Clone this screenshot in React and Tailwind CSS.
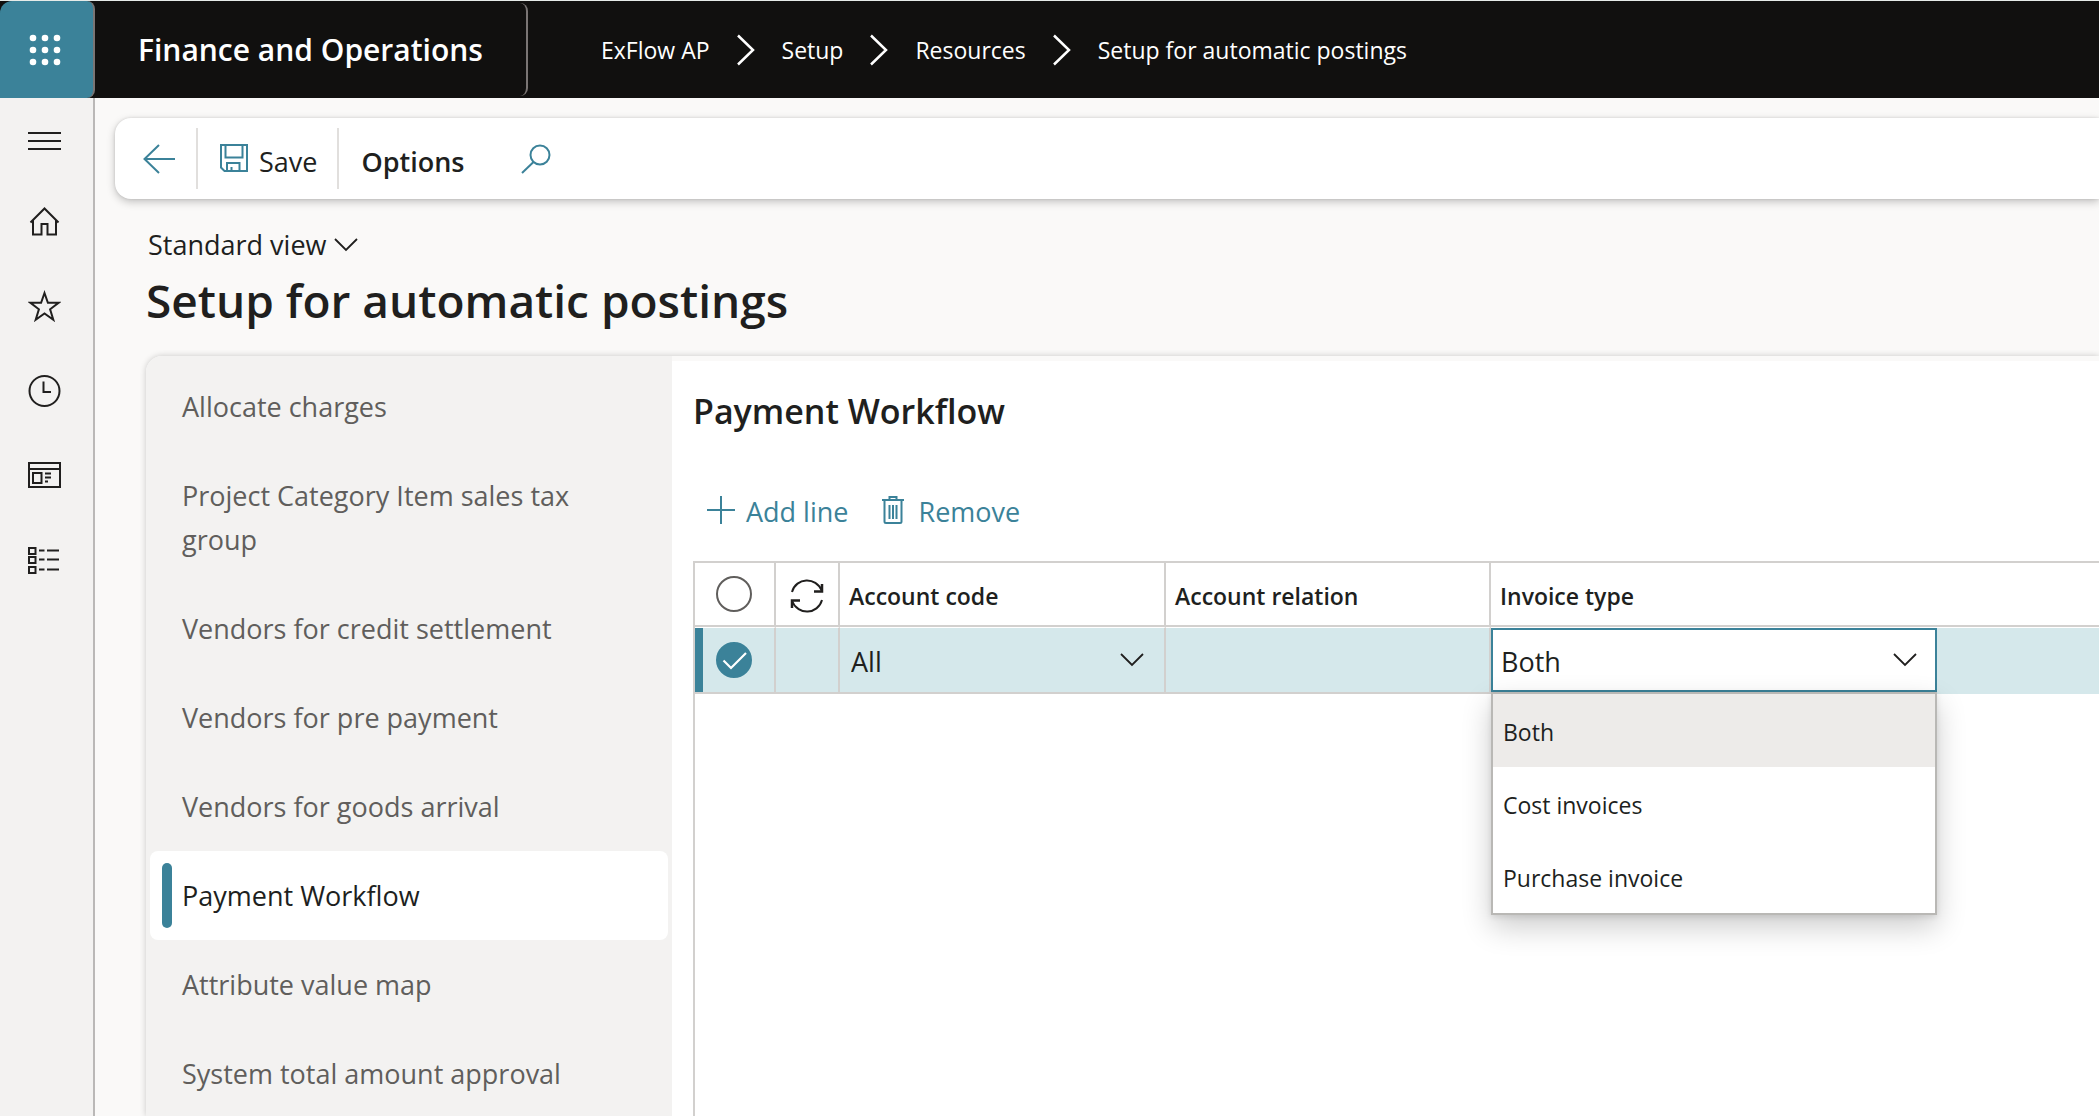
import React, { useState } from "react";

const railIcons = [
  {
    label: "Expand the navigation pane",
    art: <path d="M0 13h33M0 21h33M0 29h33" />,
  },
  {
    label: "Home",
    art: <path d="M2.5 17.5 16.5 3.5l14 14M5 15.5V29.5h8.5V19h6v10.5H28V15.5" />,
  },
  {
    label: "Favorites",
    art: <path d="m16.500 3 3.400 9.800h10.600l-8.400 6.500 3.200 10.400-8.800-6.200-8.800 6.200 3.200-10.400-8.400-6.500h10.600z" />,
  },
  {
    label: "Recent",
    art: (
      <>
        <circle cx="16.5" cy="16" r="15" />
        <path d="M15.500 6.500V17H23" />
      </>
    ),
  },
  {
    label: "Workspaces",
    art: (
      <>
        <path d="M1 3h31v24H1zM1 9h31" />
        <path d="M5 13h8.500v10H5zM17 13.500h6M17 17.500h6M17 21.500h3" />
      </>
    ),
  },
  {
    label: "Modules",
    art: (
      <>
        <path d="M1 3h6.500v6H1zM1 12h6.500v6H1zM1 22h6.500v6H1z" />
        <path d="M11 5.500h5.500M19 5.500h12M11 14.500h5.500M19 14.500h12M11 24.500h5.500M19 24.500h12" />
      </>
    ),
  },
];

const crumbs = ["ExFlow AP", "Setup", "Resources", "Setup for automatic postings"];

const sections = [
  "Allocate charges",
  "Project Category Item sales tax group",
  "Vendors for credit settlement",
  "Vendors for pre payment",
  "Vendors for goods arrival",
  "Payment Workflow",
  "Attribute value map",
  "System total amount approval",
];

const invoiceTypes = ["Both", "Cost invoices", "Purchase invoice"];

function Chevron({ className = "" }) {
  return (
    <svg className={`h-3.5 w-6 ${className}`} viewBox="0 0 24 14" fill="none" stroke="currentColor" strokeWidth="1.800" aria-hidden="true">
      <path d="M1 1l11 11L23 1" />
    </svg>
  );
}

function RowCheck({ label, defaultChecked = false }) {
  const [checked, setChecked] = useState(defaultChecked);
  return (
    <label className="relative mx-auto flex size-9">
      <input
        type="checkbox"
        aria-label={label}
        checked={checked}
        onChange={(e) => setChecked(e.target.checked)}
        className="size-9 appearance-none rounded-full border-2 border-[#605e5c] bg-white checked:border-[#3b8299] checked:bg-[#3b8299]"
      />
      {checked && (
        <svg className="pointer-events-none absolute inset-0 size-9" viewBox="0 0 36 36" fill="none" stroke="#fff" strokeWidth="2.200" aria-hidden="true">
          <path d="M7.500 18.500 15 26 30 11" />
        </svg>
      )}
    </label>
  );
}

function TopBar() {
  return (
    <header className="flex h-[98px] shrink-0 border-t border-[#e6ebe8] bg-[#11100f] text-white">
      <button type="button" aria-label="App launcher" className="flex w-[95px] items-center justify-center rounded-r-lg rounded-tl-xl border-r-2 border-[#7a7574] bg-[#3b8299] pr-1">
        <svg className="size-8" viewBox="0 0 32 32" fill="currentColor" aria-hidden="true">
          {[4, 16, 28].map((y) => [4, 16, 28].map((x) => <circle key={`${x}-${y}`} cx={x} cy={y} r="3.300" />))}
        </svg>
      </button>
      <div className="my-0.5 flex w-[433px] items-center rounded-r-lg border-r-2 border-[#7a7574] pl-[43px] text-[30px] font-semibold">
        Finance and Operations
      </div>
      <nav aria-label="Breadcrumb" className="flex items-center pl-[73px]">
        <ol className="flex items-center gap-[26px] text-[23px]">
          {crumbs.map((crumb, i) => (
            <li key={crumb} className="flex items-center gap-[26px]">
              {i > 0 && (
                <svg className="h-8 w-5" viewBox="0 0 20 32" fill="none" stroke="currentColor" strokeWidth="2.500" aria-hidden="true">
                  <path d="M2 1.500 17 16 2 30.500" />
                </svg>
              )}
              <a href="#" className="pt-0.5 whitespace-nowrap">{crumb}</a>
            </li>
          ))}
        </ol>
      </nav>
    </header>
  );
}

function Rail() {
  return (
    <nav aria-label="Navigation" className="flex w-[95px] shrink-0 flex-col gap-[52px] border-r-2 border-[#bab8b7] bg-[#f3f2f1] pt-[22px] text-[#201f1e]">
      {railIcons.map(({ label, art }) => (
        <button key={label} type="button" aria-label={label} className="ml-7 size-[33px]">
          <svg className="size-[33px]" viewBox="0 0 33 33" fill="none" stroke="currentColor" strokeWidth="2" aria-hidden="true">
            {art}
          </svg>
        </button>
      ))}
    </nav>
  );
}

function ActionBar() {
  return (
    <div className="mt-5 ml-5 flex h-[81px] shrink-0 items-center rounded-l-2xl bg-white pl-7 text-[27px] text-[#201f1e] shadow-[0_3px_8px_rgba(0,0,0,0.22),0_0_3px_rgba(0,0,0,0.12)]">
      <button type="button" aria-label="Back" className="text-[#3b8299]">
        <svg className="h-[30px] w-8" viewBox="0 0 32 30" fill="none" stroke="currentColor" strokeWidth="2" aria-hidden="true">
          <path d="M16 1 1.500 15 16 29M1.500 15H32" />
        </svg>
      </button>
      <span className="ml-[21px] h-[61px] w-0.5 bg-[#e1dfdd]" />
      <button type="button" className="ml-[22px] flex items-center gap-[11px]">
        <svg className="h-[30px] w-7 text-[#3b8299]" viewBox="0 0 28 30" fill="none" stroke="currentColor" strokeWidth="2" aria-hidden="true">
          <path d="M1 1h26v26H4.500L1 23.500zM5.500 1v12.500h17V1M7 27v-8h12.500v8M11.500 27v-4" />
        </svg>
        <span className="pt-2">Save</span>
      </button>
      <span className="ml-5 h-[61px] w-0.5 bg-[#e1dfdd]" />
      <button type="button" className="ml-[22px] pt-2 font-semibold">Options</button>
      <button type="button" aria-label="Search" className="ml-14 text-[#3b8299]">
        <svg className="size-[30px]" viewBox="0 0 30 30" fill="none" stroke="currentColor" strokeWidth="2" aria-hidden="true">
          <circle cx="19" cy="11" r="9.500" />
          <path d="M12.500 18 1 29" />
        </svg>
      </button>
    </div>
  );
}

function SectionNav() {
  return (
    <nav aria-label="Sections" className="w-[526px] shrink-0 rounded-tl-2xl bg-[#f3f2f1] text-[27px] leading-[44px]">
      <ul className="flex flex-col pt-1.5">
        {sections.map((section) => {
          const current = section === "Payment Workflow";
          return (
            <li key={section} className="px-1">
              <a
                href="#"
                aria-current={current ? "page" : undefined}
                className={
                  current
                    ? "flex items-center rounded-lg bg-white pr-8 pl-3 text-[#201f1e]"
                    : "flex items-center pr-8 pl-3 text-[#605e5c]"
                }
              >
                <span className={current ? "h-[65px] w-2.5 rounded-full bg-[#3b8299]" : "h-[65px] w-2.5"} />
                <span className="max-w-[430px] pt-[23px] pb-[22px] pl-2.5">{section}</span>
              </a>
            </li>
          );
        })}
      </ul>
    </nav>
  );
}

function InvoiceTypePicker() {
  const [value, setValue] = useState("Both");
  return (
    <div className="relative w-[446px] font-normal">
      <select
        aria-label="Invoice type"
        value={value}
        onChange={(e) => setValue(e.target.value)}
        className="block h-16 w-full appearance-none border-2 border-[#3b8299] bg-white pt-1 pr-14 pl-2 text-[27px]"
      >
        {invoiceTypes.map((type) => (
          <option key={type}>{type}</option>
        ))}
      </select>
      <Chevron className="pointer-events-none absolute top-[25px] right-5" />
      <ul role="listbox" aria-label="Invoice type options" className="absolute top-full left-0 z-10 w-full border-2 border-[#b9b8b5] bg-white text-[23px] shadow-[0_12px_28px_rgba(0,0,0,0.2),0_2px_6px_rgba(0,0,0,0.1)]">
        {invoiceTypes.map((type) => (
          <li
            key={type}
            role="option"
            aria-selected={type === value}
            onClick={() => setValue(type)}
            className="flex h-[73px] items-center pt-1 pl-2.5 aria-selected:bg-[#edebe9]"
          >
            {type}
          </li>
        ))}
      </ul>
    </div>
  );
}

function PostingsTable() {
  const head = "h-16 border-r-2 border-b-2 border-[#d2d0ce] pt-1 pl-[9px] text-left font-semibold";
  const cell = "h-[67px] border-t border-r-2 border-b-2 border-t-white border-r-[#d2d0ce] border-b-[#d2d0ce]";
  return (
    <div className="mt-[31px] flex-1 border-t-2 border-l-2 border-[#d2d0ce]">
      <table className="w-full table-fixed border-separate border-spacing-0 text-[#201f1e]">
        <colgroup>
          <col className="w-[81px]" />
          <col className="w-16" />
          <col className="w-[326px]" />
          <col className="w-[325px]" />
          <col />
        </colgroup>
        <thead className="text-[23px]">
          <tr>
            <th scope="col" className="h-16 border-r-2 border-b-2 border-[#d2d0ce] pr-0.5">
              <RowCheck label="Select all rows" />
            </th>
            <th scope="col" aria-label="Refresh" className="h-16 border-r-2 border-b-2 border-[#d2d0ce] pt-1">
              <svg className="mx-auto size-[34px]" viewBox="0 0 34 34" fill="none" stroke="currentColor" strokeWidth="2" aria-hidden="true">
                <path d="M2 13C6-1.500 26-3 32 12M32 21C28 35.500 8 37 2 22" />
                <path d="M32 5v7.500h-8M2 29v-7.500h8" strokeWidth="2.500" />
              </svg>
            </th>
            <th scope="col" className={head}>Account code</th>
            <th scope="col" className={head}>Account relation</th>
            <th scope="col" className="h-16 border-b-2 border-[#d2d0ce] pt-1 pl-[9px] text-left font-semibold">Invoice type</th>
          </tr>
        </thead>
        <tbody className="text-[27px]">
          <tr className="bg-[#d5e8eb]">
            <td className={cell}>
              <div className="flex h-16 items-center border-l-8 border-[#3b8299] pr-2.5">
                <RowCheck label="Select row" defaultChecked />
              </div>
            </td>
            <td className={cell} />
            <td className={cell}>
              <div className="relative">
                <select aria-label="Account code" className="block h-16 w-full appearance-none bg-transparent pt-1 pr-14 pl-[11px]">
                  <option>All</option>
                </select>
                <Chevron className="pointer-events-none absolute top-[25px] right-5" />
              </div>
            </td>
            <td className={cell} />
            <td className="h-[67px] border-t border-b-2 border-t-white border-b-[#d5e8eb]">
              <InvoiceTypePicker />
            </td>
          </tr>
        </tbody>
      </table>
    </div>
  );
}

export default function App() {
  return (
    <div className="flex h-screen flex-col overflow-hidden bg-[#faf9f8] font-['Open_Sans','Noto_Sans',sans-serif] text-[#201f1e]">
      <TopBar />
      <div className="flex min-h-0 flex-1">
        <Rail />
        <main className="flex min-w-0 flex-1 flex-col">
          <ActionBar />
          <div className="flex min-h-0 flex-1 flex-col pl-[51px]">
            <button type="button" className="mt-6 flex items-center gap-2 self-start pl-0.5 text-[27px] leading-[44px]">
              Standard view
              <Chevron />
            </button>
            <h1 className="text-[46px] leading-[66px] font-semibold">Setup for automatic postings</h1>
            <div className="mt-[23px] flex min-h-0 flex-1 rounded-tl-2xl shadow-[0_0_6px_rgba(0,0,0,0.2)]">
              <SectionNav />
              <section className="mt-[5px] flex min-w-0 flex-1 flex-col bg-white pt-7 pl-[21px]">
                <h2 className="text-[34px] leading-[44px] font-semibold">Payment Workflow</h2>
                <div className="mt-[57px] flex gap-[34px] pl-3.5 text-[27px] leading-[44px] text-[#3b8299]">
                  <button type="button" className="flex items-center gap-[11px]">
                    <svg className="size-7" viewBox="0 0 28 28" fill="none" stroke="currentColor" strokeWidth="2" aria-hidden="true">
                      <path d="M14 0v28M0 14h28" />
                    </svg>
                    <span className="-mb-1">Add line</span>
                  </button>
                  <button type="button" className="flex items-center gap-3.5">
                    <svg className="h-7 w-[22px]" viewBox="0 0 22 28" fill="none" stroke="currentColor" strokeWidth="2" aria-hidden="true">
                      <path d="M0 4h22M7.500 4V1h7v3M2.500 4v21.500q0 1.500 1.500 1.500h14q1.500 0 1.500-1.500V4M7.500 9v14M11 9v14M14.500 9v14" />
                    </svg>
                    <span className="-mb-1">Remove</span>
                  </button>
                </div>
                <PostingsTable />
              </section>
            </div>
          </div>
        </main>
      </div>
    </div>
  );
}
